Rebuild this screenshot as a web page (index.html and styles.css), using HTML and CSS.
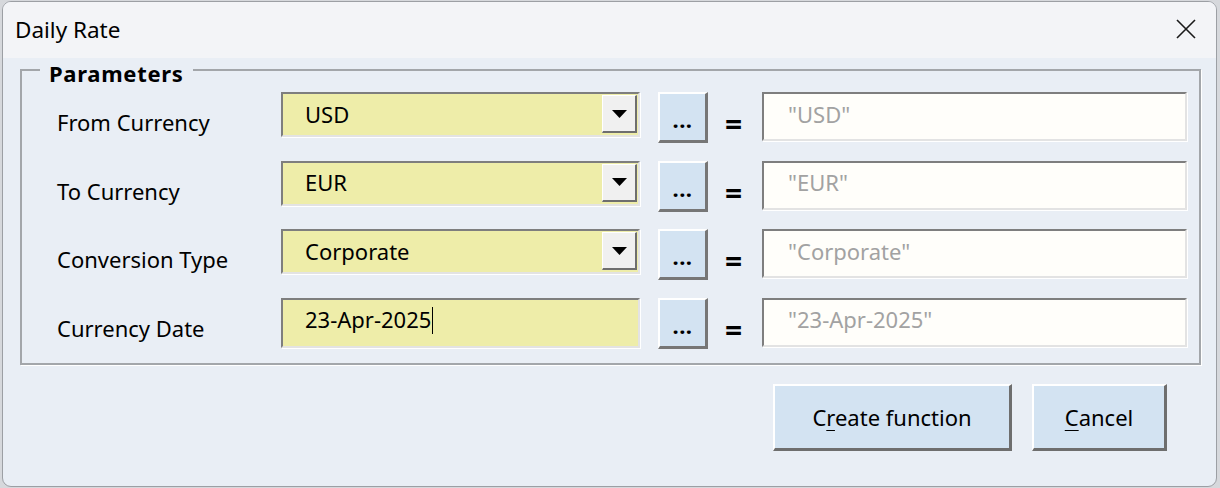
FILE: index.html
```html
<!DOCTYPE html>
<html>
<head>
<meta charset="utf-8">
<link rel="stylesheet" href="styles.css">
</head>
<body>
<div class="window">
  <div class="titlebar">
    <span class="title">Daily Rate</span>
    <span class="close"><svg width="20" height="20" viewBox="0 0 20 20"><path d="M1 1 L19 19 M19 1 L1 19" stroke="#1a1a1a" stroke-width="1.6" fill="none"/></svg></span>
  </div>
  <div class="content">
    <fieldset class="group">
      <legend class="legend">Parameters</legend>
      <div class="grid">
        <div class="label">From Currency</div>
        <div class="combo"><span class="value">USD</span><span class="drop"><svg width="15" height="8" viewBox="0 0 15 8"><path d="M0 0 H15 L7.5 8 Z" fill="#000"/></svg></span></div>
        <div class="dots">...</div>
        <div class="eq">=</div>
        <div class="field">"USD"</div>

        <div class="label">To Currency</div>
        <div class="combo"><span class="value">EUR</span><span class="drop"><svg width="15" height="8" viewBox="0 0 15 8"><path d="M0 0 H15 L7.5 8 Z" fill="#000"/></svg></span></div>
        <div class="dots">...</div>
        <div class="eq">=</div>
        <div class="field">"EUR"</div>

        <div class="label">Conversion Type</div>
        <div class="combo"><span class="value">Corporate</span><span class="drop"><svg width="15" height="8" viewBox="0 0 15 8"><path d="M0 0 H15 L7.5 8 Z" fill="#000"/></svg></span></div>
        <div class="dots">...</div>
        <div class="eq">=</div>
        <div class="field">"Corporate"</div>

        <div class="label">Currency Date</div>
        <div class="combo combo-date"><span class="value">23-Apr-2025<span class="caret"></span></span></div>
        <div class="dots">...</div>
        <div class="eq">=</div>
        <div class="field">"23-Apr-2025"</div>
      </div>
    </fieldset>
    <div class="actions">
      <button class="btn btn-create">C<u>r</u>eate function</button>
      <button class="btn btn-cancel"><u>C</u>ancel</button>
    </div>
  </div>
</div>
</body>
</html>
```
FILE: styles.css
```css
html, body {
  margin: 0;
  padding: 0;
  background: #d6d8dc;
}
body {
  padding: 1px 0 0 2px;
  font-family: "Noto Sans", "Open Sans", sans-serif;
  color: #000;
}
.window {
  box-sizing: border-box;
  width: 1215px;
  height: 486px;
  border: 1px solid #9c9fa4;
  border-radius: 9px;
  overflow: hidden;
  background: #e9eef5;
}
.titlebar {
  height: 56px;
  background: #f3f4f7;
  display: flex;
  align-items: center;
  justify-content: space-between;
  padding: 0 20px 0 12px;
}
.title {
  font-size: 22.5px;
  line-height: 26px;
}
.close {
  display: flex;
  padding-bottom: 2px;
}
.content {
  padding: 0 15px 0 17px;
}
.group {
  margin: 0;
  padding: 0;
  min-inline-size: 0;
  border: 2px solid #a3a6aa;
  box-shadow: 1px 1px 0 #ffffff;
}
.legend {
  margin-left: 18px;
  padding: 4.5px 9px 0 9px;
  font-size: 22px;
  line-height: 20px;
  font-weight: 700;
  letter-spacing: 0.7px;
}
.grid {
  display: grid;
  grid-template-columns: 224px 377px 50px 54px 425px;
  grid-auto-rows: 51px;
  row-gap: 17.5px;
  padding: 9.5px 7px 14px 35px;
}
.label {
  font-size: 22px;
  line-height: 26px;
  padding-top: 17px;
  white-space: nowrap;
}
.combo {
  box-sizing: border-box;
  width: 359px;
  height: 45px;
  display: flex;
  background: #eeeda9;
  border: 2px solid;
  border-color: #7e7e7e #e3e3e3 #e3e3e3 #7e7e7e;
  box-shadow: 1px 1px 0 #ffffff;
}
.combo-date {
  height: 50px;
}
.value {
  flex: 1;
  font-size: 22px;
  line-height: 26px;
  padding: 6.5px 0 0 22px;
}
.caret {
  display: inline-block;
  width: 1px;
  height: 27px;
  background: #000;
  vertical-align: -6px;
  margin-left: 1px;
}
.drop {
  box-sizing: border-box;
  width: 35px;
  margin: 1px 1px 2px 0;
  background: #f0f0f0;
  border: 1px solid;
  border-width: 1px 2px 2px 1px;
  border-color: #ffffff #6e6e6e #6e6e6e #ffffff;
  display: flex;
  align-items: center;
  justify-content: center;
}
.dots {
  box-sizing: border-box;
  width: 50px;
  height: 51px;
  background: #d3e3f2;
  border: solid;
  border-width: 2px 3px 3px 2px;
  border-color: #ffffff #767676 #767676 #ffffff;
  font-size: 22px;
  font-weight: 700;
  line-height: 20px;
  text-align: center;
  padding-top: 15px;
  letter-spacing: 0.5px;
}
.eq {
  font-size: 30px;
  font-weight: 700;
  line-height: 30px;
  padding-top: 17px;
  padding-left: 17px;
}
.field {
  box-sizing: border-box;
  height: 49px;
  background: #fffefa;
  border: 2px solid;
  border-color: #7e7e7e #e3e3e3 #e3e3e3 #7e7e7e;
  box-shadow: 1px 1px 0 #ffffff;
  color: #a2a2a2;
  font-size: 22px;
  line-height: 26px;
  padding: 6.5px 0 0 24px;
}
.actions {
  display: flex;
  justify-content: flex-end;
  gap: 20px;
  margin-top: 19px;
  padding-right: 34px;
}
.btn {
  box-sizing: border-box;
  height: 67px;
  background: #d3e3f2;
  border: solid;
  border-width: 2px 3px 3px 2px;
  border-color: #ffffff #6e6e6e #6e6e6e #ffffff;
  font-family: "Noto Sans", "Open Sans", sans-serif;
  font-size: 22px;
  color: #000;
  padding: 0;
}
.btn u {
  text-underline-offset: 4px;
  text-decoration-thickness: 1px;
}
.btn-create {
  width: 239px;
}
.btn-cancel {
  width: 135px;
}
```
